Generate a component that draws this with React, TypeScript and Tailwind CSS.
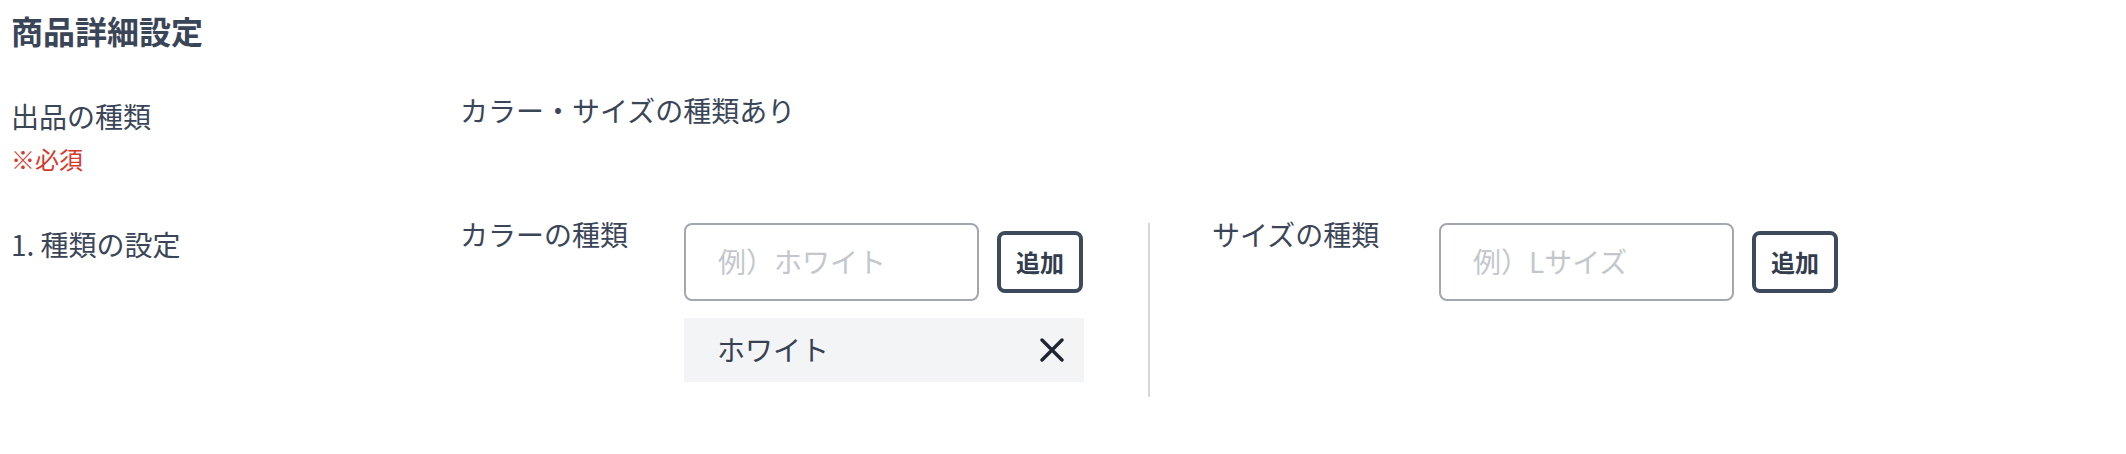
import React from "react";

const font = { fontFamily: '"Noto Sans CJK JP", "Noto Sans", sans-serif' };

function AddField({ placeholder }: { placeholder: string }) {
  return (
    <div className="flex items-center">
      <input
        placeholder={placeholder}
        className="h-[78px] w-[295px] rounded-[8px] border-2 border-[#a2a7b0] bg-white pb-[3px] pl-[32px] text-[28px] text-[#374151] outline-none placeholder:text-[#c3c7cd]"
        style={font}
      />
      <button className="ml-[18px] flex h-[62px] w-[86px] items-center justify-center rounded-[8px] border-4 border-[#3d4a5e] bg-white text-[24px] font-bold text-[#333d4e]">
        追加
      </button>
    </div>
  );
}

function Chip({ label }: { label: string }) {
  return (
    <div className="mt-[17px] flex h-[64px] w-[400px] items-center justify-between bg-[#f3f4f6] pl-[33px] pr-[20px]">
      <span className="pb-[3px] text-[28px] leading-[42px] text-[#374151]">{label}</span>
      <svg width="24" height="24" viewBox="0 0 24 24" fill="none" stroke="#1f2533" strokeWidth="3.4" strokeLinecap="round">
        <path d="M2 2 22 22M22 2 2 22" />
      </svg>
    </div>
  );
}

export default function App() {
  return (
    <div className="h-[454px] w-full bg-white pl-[11px] pt-[6px] text-[#3b4558]" style={font}>
      <h2 className="text-[32px] font-bold leading-[48px]">商品詳細設定</h2>

      <div className="mt-[35px] flex">
        <div className="w-[449px] pt-[6px]">
          <p className="text-[28px] leading-[42px]">出品の種類</p>
          <p className="mt-[4px] text-[24px] leading-[36px] text-[#d6392b]">※必須</p>
        </div>
        <p className="text-[28px] leading-[42px]">カラー・サイズの種類あり</p>
      </div>

      <div className="mt-[36px] flex">
        <div className="w-[449px] pt-[10px]">
          <p className="text-[28px] leading-[42px]">1. 種類の設定</p>
        </div>
        <div className="flex items-stretch">
          <div className="flex pb-[15px]">
            <p className="w-[224px] text-[28px] leading-[42px]">カラーの種類</p>
            <div className="pt-[10px]">
              <AddField placeholder="例）ホワイト" />
              <Chip label="ホワイト" />
            </div>
          </div>
          <div className="ml-[64px] mr-[62px] mt-[10px] w-[2px] bg-[#d4d6da]" />
          <div className="flex">
            <p className="w-[227px] text-[28px] leading-[42px]">サイズの種類</p>
            <div className="pt-[10px]">
              <AddField placeholder="例）Lサイズ" />
            </div>
          </div>
        </div>
      </div>
    </div>
  );
}
